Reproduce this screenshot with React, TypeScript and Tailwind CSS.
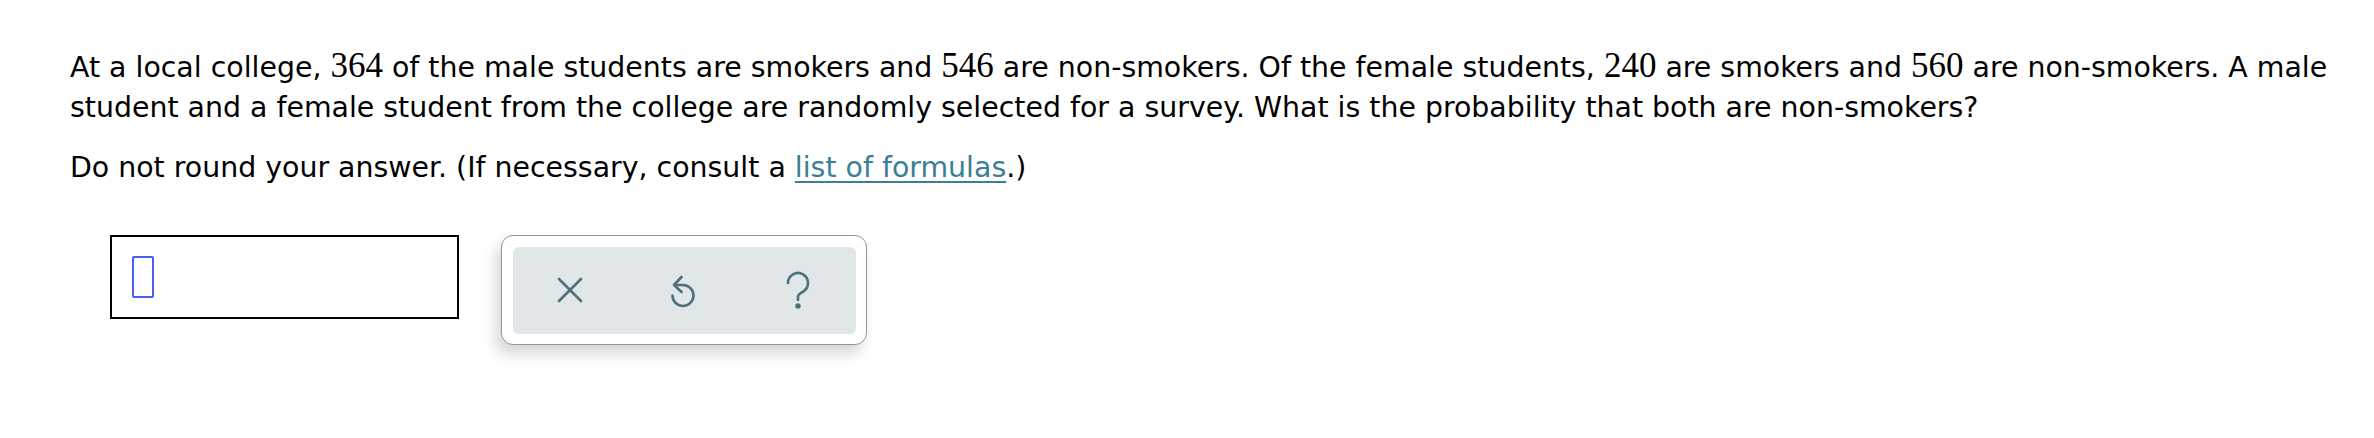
import React from 'react';

const Num: React.FC<{ children: React.ReactNode }> = ({ children }) => (
  <span className="font-['Liberation_Serif','Times_New_Roman',serif] text-[35px] leading-[40px]">{children}</span>
);

const App: React.FC = () => {
  return (
    <div className="min-h-screen bg-white pt-[46px] pl-[70px] pr-[24px] text-black font-['DejaVu_Sans','Verdana',sans-serif] text-[28.4px] leading-[40px]">
      {/* Question */}
      <p>
        At a local college, <Num>364</Num> of the male students are smokers and <Num>546</Num> are non-smokers. Of the
        female students, <Num>240</Num> are smokers and <Num>560</Num> are non-smokers. A male student and a female
        student from the college are randomly selected for a survey. What is the probability that both are non-smokers?
      </p>
      <p className="mt-[20px]">
        Do not round your answer. (If necessary, consult a{' '}
        <a href="#" className="text-[#3a7f95] underline underline-offset-[4px] decoration-[2px]">list of formulas</a>.)
      </p>

      {/* Answer area */}
      <div className="mt-[47px] ml-[40px] flex items-start gap-[42px]">
        <div className="w-[349px] h-[84px] border-2 border-black pl-[20px] pt-[19px]">
          <div className="w-[22px] h-[42px] border-2 border-[#4a5df7] rounded-[2px]" />
        </div>

        <div className="w-[366px] h-[110px] rounded-[12px] border-[1.5px] border-[#849aa3] bg-white p-[10.5px] shadow-[-5px_9px_14px_rgba(0,0,0,0.16)]">
          <div className="h-full rounded-[6px] bg-[#e1e6e9] flex items-center justify-center gap-[78px] text-[#4e6f7b]">
            <button className="w-[36px] h-[36px] flex items-center justify-center">
              <svg width="26" height="26" viewBox="0 0 26 26" fill="none" stroke="currentColor" strokeWidth="2.6" strokeLinecap="round">
                <path d="M2 2 L24 24 M24 2 L2 24" />
              </svg>
            </button>
            <button className="w-[36px] h-[36px] flex items-center justify-center">
              <svg width="30" height="36" viewBox="0 0 30 36" fill="none" stroke="currentColor" strokeWidth="2.6" strokeLinecap="round" strokeLinejoin="round">
                <path d="M14 13 A10.5 10.5 0 1 1 3.5 23.5" />
                <path d="M14 13 H6" />
                <path d="M12.5 5 L5 13 L12.5 20" />
              </svg>
            </button>
            <button className="w-[36px] h-[36px] flex items-center justify-center">
              <svg width="26" height="38" viewBox="0 0 26 38" fill="none" stroke="currentColor" strokeWidth="2.6" strokeLinecap="round">
                <path d="M3 12 A10 10 0 1 1 18 20.7 Q13 23 13 26 V29" />
                <circle cx="13" cy="35" r="1.4" fill="currentColor" />
              </svg>
            </button>
          </div>
        </div>
      </div>
    </div>
  );
};

export default App;
